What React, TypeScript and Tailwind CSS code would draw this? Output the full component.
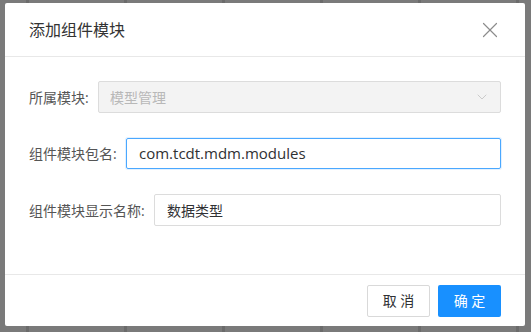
import { ChevronDown, X } from "lucide-react";

const font = { fontFamily: '"Open Sans", "Noto Sans CJK SC", sans-serif' };

const App = () => {
  const cols = [27, 125, 223, 321, 419, 517];
  return (
    <div className="relative w-[531px] h-[332px] overflow-hidden bg-[#7a7a7a]" style={font}>
      {/* 背景表格的遮罩 */}
      <div className="absolute inset-0 flex">
        {cols.map((x, i) => (
          <div key={i} className="absolute top-0 bottom-0 w-[3px] bg-[#6b6b6b]" style={{ left: x - 1 }} />
        ))}
      </div>

      {/* 弹窗 */}
      <div className="absolute left-[5px] top-[3px] w-[520px] h-[323px] bg-white rounded-[2px] flex flex-col">
        <div className="h-[54px] flex items-center justify-between pl-[24px] pr-[22px] border-b border-[#e8e8e8]">
          <span className="text-[16px] text-[#333] pt-[1px]">添加组件模块</span>
          <X className="w-[26px] h-[26px] text-[#8c8c8c]" strokeWidth={1.1} />
        </div>

        <div className="flex-1 flex flex-col pl-[24px] pr-[24px] pt-[24px] gap-[25px] text-[14px]">
          <div className="flex items-center">
            <span className="text-[#555] w-[69px] shrink-0">所属模块:</span>
            <div className="flex-1 h-[32px] border border-[#dcdcdc] bg-[#f3f3f3] rounded-[2px] flex items-center justify-between pl-[11px] pr-[10px]">
              <span className="text-[#b8b8b8]">模型管理</span>
              <ChevronDown className="w-[16px] h-[16px] text-[#c0c0c0]" strokeWidth={1.2} />
            </div>
          </div>

          <div className="flex items-center">
            <span className="text-[#555] w-[97px] shrink-0">组件模块包名:</span>
            <div className="flex-1 h-[31px] border border-[#4aa8ff] rounded-[2px] flex items-center pl-[12px] shadow-[0_0_0_1px_rgba(64,158,255,0.15)]">
              <span className="text-[#303133] text-[15px]">com.tcdt.mdm.modules</span>
            </div>
          </div>

          <div className="flex items-center">
            <span className="text-[#555] w-[125px] shrink-0">组件模块显示名称:</span>
            <div className="flex-1 h-[32px] border border-[#dcdcdc] rounded-[2px] flex items-center pl-[12px]">
              <span className="text-[#303133]">数据类型</span>
            </div>
          </div>
        </div>

        <div className="h-[52px] border-t border-[#e8e8e8] flex items-center justify-end gap-[8px] pr-[24px]">
          <button className="w-[63px] h-[32px] border border-[#d9d9d9] rounded-[2px] text-[14px] text-[#303133] bg-white whitespace-pre">
            取 消
          </button>
          <button className="w-[63px] h-[32px] rounded-[2px] text-[14px] text-white bg-[#1890ff] whitespace-pre">
            确 定
          </button>
        </div>
      </div>
    </div>
  );
};

export default App;
